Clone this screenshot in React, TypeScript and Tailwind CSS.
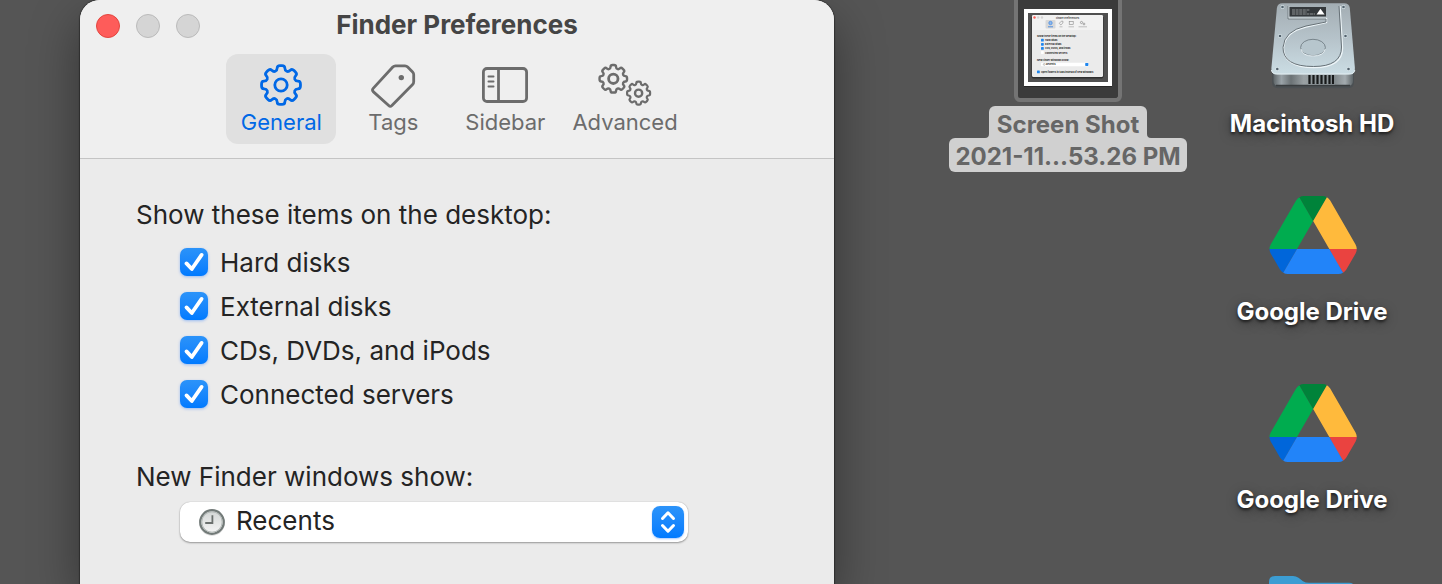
import { useState } from "react";
import type { ReactNode } from "react";
import clsx from "clsx";

// Closed path through the points with every corner rounded off
function roundedPath(points: number[][], cut: number) {
  return points
    .map((p, i) => {
      const prev = points[(i + points.length - 1) % points.length];
      const next = points[(i + 1) % points.length];
      const towards = (q: number[]) => {
        const len = Math.hypot(q[0] - p[0], q[1] - p[1]);
        const t = Math.min(cut / len, 0.5);
        return `${(p[0] + (q[0] - p[0]) * t).toFixed(2)} ${(p[1] + (q[1] - p[1]) * t).toFixed(2)}`;
      };
      return `${i === 0 ? "M" : "L"}${towards(prev)}Q${p[0].toFixed(2)} ${p[1].toFixed(2)} ${towards(next)}`;
    })
    .join("") + "Z";
}

function gearPath(cx: number, cy: number, outer: number, inner: number) {
  const points: number[][] = [];
  for (let tooth = 0; tooth < 8; tooth++) {
    const corners = [
      [inner, -15],
      [outer, -11],
      [outer, 11],
      [inner, 15],
    ];
    corners.forEach(([r, deg]) => {
      const a = ((tooth * 45 + deg - 90) * Math.PI) / 180;
      points.push([cx + r * Math.cos(a), cy + r * Math.sin(a)]);
    });
  }
  return roundedPath(points, outer * 0.14);
}

function GeneralIcon() {
  return (
    <svg width="46" height="46" viewBox="0 0 46 46" fill="none" stroke="currentColor" strokeWidth="2.8" strokeLinejoin="round">
      <path d={gearPath(23, 23, 19.8, 15)} />
      <circle cx="23" cy="23" r="6.2" />
    </svg>
  );
}

function TagsIcon() {
  return (
    <svg width="46" height="46" viewBox="0 0 46 46" fill="none" stroke="currentColor" strokeWidth="2.8" strokeLinejoin="round">
      <path d="M25.5 3.9H35Q36.6 3.9 37.7 5L42.6 9.9Q43.7 11 43.7 12.6V19.8Q43.7 21.4 42.6 22.5L21.9 43.6Q20.3 45.1 18.7 43.6L3.2 29.6Q1.8 28 3.2 26.4L22.8 5Q23.9 3.9 25.5 3.9Z" />
      <circle cx="31.3" cy="15.6" r="2.7" fill="currentColor" stroke="none" />
    </svg>
  );
}

function SidebarIcon() {
  return (
    <svg width="46" height="46" viewBox="0 0 46 46" fill="none" stroke="currentColor" strokeWidth="2.8">
      <rect x="1.4" y="6.5" width="43.2" height="33" rx="3.6" />
      <path d="M16.5 6.5V39.5" />
      <path d="M6.4 14.5H11.6M6.4 19.5H11.6M6.4 24.5H11.6" strokeWidth="1.8" strokeLinecap="round" />
    </svg>
  );
}

function AdvancedIcon() {
  return (
    <svg width="56" height="46" viewBox="0 0 56 46" fill="none" stroke="currentColor" strokeWidth="2.4" strokeLinejoin="round">
      <path d={gearPath(16.3, 16.8, 14, 10.7)} />
      <circle cx="16.3" cy="16.8" r="4.7" strokeWidth="2.8" />
      <path d={gearPath(41.6, 31.2, 11.7, 9)} strokeWidth="2.2" />
      <circle cx="41.6" cy="31.2" r="3.6" />
    </svg>
  );
}

function ClockIcon() {
  return (
    <svg width="28" height="28" viewBox="0 0 28 28" fill="none" className="pointer-events-none absolute top-[6px] left-[18px]">
      <defs>
        <linearGradient id="clock-face" x1="0" y1="0" x2="0" y2="1">
          <stop offset="0" stopColor="#d2d5d4" />
          <stop offset="1" stopColor="#f6f6f6" />
        </linearGradient>
      </defs>
      <circle cx="14" cy="15" r="12.8" fill="#000" fillOpacity=".15" />
      <circle cx="14" cy="14" r="11.8" fill="url(#clock-face)" stroke="#727a78" strokeWidth="2.2" />
      <circle cx="14" cy="14" r="10.2" stroke="#b3b9b7" strokeWidth="1" />
      <path d="M14.4 7.2V15H7.2" stroke="#6b706e" strokeWidth="1.8" />
    </svg>
  );
}

function HardDiskIcon() {
  return (
    <svg width="108" height="108" viewBox="0 0 108 108" fill="none">
      <defs>
        <linearGradient id="plate" x1="0" y1="0" x2="0" y2="1">
          <stop offset="0" stopColor="#a3adb3" />
          <stop offset=".5" stopColor="#b6c3ca" />
          <stop offset="1" stopColor="#cbdde4" />
        </linearGradient>
        <linearGradient id="base" x1="0" y1="0" x2="1" y2="0">
          <stop offset="0" stopColor="#5f6669" />
          <stop offset=".1" stopColor="#9aa3a8" />
          <stop offset=".22" stopColor="#6b7275" />
          <stop offset=".38" stopColor="#9aa1a4" />
          <stop offset=".75" stopColor="#7d8487" />
          <stop offset=".9" stopColor="#a3abaf" />
          <stop offset="1" stopColor="#5f6669" />
        </linearGradient>
      </defs>
      <path d="M14 70H96V82Q96 88.2 90 88.2H20Q14 88.2 14 82Z" fill="#4b5053" />
      <path d="M15.5 70H95V81Q95 86 89 86H21Q15.5 86 15.5 81Z" fill="url(#base)" />
      <path d="M18 85.5H92" stroke="#3a3e40" strokeWidth="1.4" />
      <path d="M50 73.5H77V84.5H50Z" fill="#8d9599" />
      <path d="M51.5 75V84M55.5 75V84M59.5 75V84M63.5 75V84M67.5 75V84M71.5 75V84M75 75V84" stroke="#17191a" strokeWidth="2.2" />
      <path d="M24.5 3.3H86Q91.3 3.3 91.8 8L96.9 68Q97.3 74.3 91.5 74.3H18.7Q13 74.3 13.4 68L18.9 8Q19.4 3.3 24.5 3.3Z" fill="url(#plate)" />
      <path d="M13.5 70Q14 74 18.7 74H91.5Q96.3 74 96.8 70" stroke="#e4eff3" strokeWidth="1" />
      <path d="M82 6L84.5 48Q84.5 67.5 56 67.5Q25.5 67.5 25.5 48Q26.500 32 48 27L68.5 22.5V18.5H30.5V6" stroke="#edf5f8" strokeWidth="1.4" />
      <path d="M81 6L83.5 47Q83.5 66.5 55.5 66.5Q25 66.5 25 47.5Q26 31 48 26L68 22V19H30V6" stroke="#677177" strokeWidth="1" />
      <rect x="31.5" y="7" width="36.5" height="9.5" fill="#34383b" />
      <path d="M34 10H52M34 12H49M34 14H57" stroke="#a3a8aa" strokeWidth=".8" strokeDasharray="3 .6" />
      <path d="M62.5 8.8L66.6 14.6H58.5Z" fill="#fff" />
      <ellipse cx="55" cy="47.5" rx="12.4" ry="8.2" fill="#b7c6cd" stroke="#717d83" strokeWidth=".9" />
      <path d="M43 49Q44.5 56 55 56Q65.500 56 67.3 49" stroke="#edf5f8" strokeWidth=".9" />
      {[[24.5, 7], [85.5, 7], [22, 36], [87.5, 36], [19.3, 69], [90.5, 69]].map(([x, y]) => (
        <g key={`${x}-${y}`}>
          <circle cx={x} cy={y} r="1.9" fill="#dce8ec" />
          <circle cx={x} cy={y} r="1.3" fill="#52616c" />
        </g>
      ))}
    </svg>
  );
}

function DriveIcon() {
  return (
    <svg width="108" height="108" viewBox="0 0 108 108">
      <g transform="translate(11.5 8)">
        <path d="M6.6 66.85 10.45 73.5c.8 1.4 1.95 2.5 3.3 3.3L27.5 53H0c0 1.55.4 3.1 1.2 4.5z" fill="#0066da" />
        <path d="M43.65 25 29.9 1.2c-1.35.8-2.5 1.9-3.3 3.3l-25.4 44A9.06 9.06 0 0 0 0 53h27.5z" fill="#00ac4f" />
        <path d="M73.55 76.8c1.35-.8 2.5-1.9 3.3-3.3l1.6-2.75L86.1 57.5c.8-1.4 1.2-2.95 1.2-4.5H59.8l5.85 11.5z" fill="#ea4340" />
        <path d="M43.65 25 57.4 1.2C56.05.4 54.5 0 52.9 0H34.4c-1.6 0-3.15.45-4.5 1.2z" fill="#00833a" />
        <path d="M59.8 53H27.5L13.75 76.8c1.35.8 2.9 1.2 4.5 1.2h50.8c1.6 0 3.15-.45 4.5-1.2z" fill="#2284f9" />
        <path d="M73.4 26.5 60.7 4.5c-.8-1.4-1.95-2.5-3.3-3.3L43.65 25l16.15 28h27.45c0-1.55-.4-3.1-1.2-4.5z" fill="#ffba3c" />
      </g>
    </svg>
  );
}

function FolderIcon() {
  return (
    <svg width="108" height="108" viewBox="0 0 108 108">
      <path d="M11 18Q11 12 17 12H35Q38 12 40.5 13.8L45 17.2Q47.5 18.8 51 18.8H91Q97 18.8 97 25V84Q97 90 91 90H17Q11 90 11 84Z" fill="#3c9dd3" />
    </svg>
  );
}

const thumbItems = ["Hard disks", "External disks", "CDs, DVDs, and iPods", "Connected servers"];

function ScreenShotIcon() {
  return (
    <div className="h-[102px] w-[108px] rounded-b-md border-x-4 border-b-4 border-[#747474] bg-[#3b3b3b]">
      <svg width="100" height="98" viewBox="0 0 100 98" className="font-['Inter',sans-serif]">
        <rect x="6" y="10" width="88" height="77" fill="#000" fillOpacity=".35" />
        <rect x="6" y="9" width="88" height="77" fill="#fff" />
        <rect x="10" y="13" width="80" height="69" fill="#505050" />
        <rect x="13.5" y="15.5" width="72" height="63" rx="2" fill="#2f2f2f" />
        <rect x="14" y="15" width="71" height="62" rx="1.5" fill="#ebebeb" />
        <path d="M14 30V16.5Q14 15 15.5 15H83.5Q85 15 85 16.5V30Z" fill="#f2f2f2" />
        <circle cx="16.5" cy="17.5" r="1.2" fill="#fe5f57" />
        <circle cx="20.2" cy="17.5" r="1.2" fill="#d5d5d5" />
        <circle cx="24" cy="17.5" r="1.2" fill="#d5d5d5" />
        <text x="49.5" y="18.600" fontSize="2.5" fontWeight="700" textAnchor="middle" fill="#444">Finder Preferences</text>
        <rect x="27.5" y="20" width="10" height="8.5" rx="1" fill="#d8d8d8" />
        <circle cx="32.5" cy="23" r="1.7" fill="#8db8ee" stroke="#3f86e0" strokeWidth=".7" />
        <path d="M30 26.8H35" stroke="#3f86e0" strokeWidth=".9" />
        <path d="M41.3 23.3L43.3 21.2H44.9V23L42.8 25Z" stroke="#888" strokeWidth=".6" fill="none" />
        <rect x="51.2" y="21.4" width="4" height="3" stroke="#888" strokeWidth=".6" fill="none" />
        <circle cx="63.5" cy="22.5" r="1.1" stroke="#888" strokeWidth=".7" fill="none" />
        <circle cx="66" cy="24" r=".9" stroke="#888" strokeWidth=".7" fill="none" />
        <path d="M41.5 26.8H44.5M50.5 26.8H56M60.5 26.8H69" stroke="#aaa" strokeWidth=".7" />
        <text x="19" y="36.6" fontSize="2.4" fill="#222">Show these items on the desktop:</text>
        {thumbItems.map((item, i) => (
          <g key={item}>
            <rect x="23" y={38.8 + i * 4.1} width="2.8" height="2.8" rx=".6" fill={i < 3 ? "#1f86ee" : "#fff"} />
            <text x="27" y={41.2 + i * 4.1} fontSize="2.4" fill="#222">{item}</text>
          </g>
        ))}
        <text x="19" y="61.3" fontSize="2.4" fill="#222">New Finder windows show:</text>
        <rect x="23" y="62.7" width="48" height="3.5" rx=".8" fill="#fff" />
        <circle cx="26.2" cy="64.4" r=".9" stroke="#888" strokeWidth=".5" fill="none" />
        <text x="28" y="65.4" fontSize="2.4" fill="#222">Recents</text>
        <rect x="67.2" y="63" width="3.2" height="2.9" rx=".6" fill="#1f86ee" />
        <rect x="19" y="70.5" width="2.8" height="2.8" rx=".6" fill="#1f86ee" />
        <text x="23" y="73" fontSize="2.4" fill="#222">Open folders in tabs instead of new windows</text>
      </svg>
    </div>
  );
}

function DesktopItem({ icon, label }: { icon: ReactNode; label?: string }) {
  return (
    <div className="flex h-47 w-61 flex-col items-center">
      <div className="h-[108px]">{icon}</div>
      {label && (
        <span className="text-2xl leading-8 font-bold text-white [text-shadow:0_2px_3px_rgba(0,0,0,0.6),0_3px_12px_rgba(0,0,0,0.4)]">
          {label}
        </span>
      )}
    </div>
  );
}

function SelectedItem() {
  return (
    <div className="flex h-47 w-61 flex-col items-center text-2xl leading-[30px] font-bold whitespace-nowrap text-[#666666]">
      <div className="h-[106px]">
        <ScreenShotIcon />
      </div>
      <span className="relative -mb-0.5 rounded-t-md bg-[#d0d0d0] px-2 pt-1">
        Screen Shot
        <svg width="4" height="4" viewBox="0 0 4 4" className="absolute bottom-0.5 -left-1">
          <path d="M4 0V4H0Q4 4 4 0Z" fill="#d0d0d0" />
        </svg>
        <svg width="4" height="4" viewBox="0 0 4 4" className="absolute -right-1 bottom-0.5">
          <path d="M0 0V4H4Q0 4 0 0Z" fill="#d0d0d0" />
        </svg>
      </span>
      <span className="rounded-md bg-[#d0d0d0] px-1.5 pt-1">2021-11...53.26 PM</span>
    </div>
  );
}

const tabs = [
  { name: "General", icon: <GeneralIcon /> },
  { name: "Tags", icon: <TagsIcon /> },
  { name: "Sidebar", icon: <SidebarIcon /> },
  { name: "Advanced", icon: <AdvancedIcon /> },
];

function Toolbar() {
  const [active, setActive] = useState("General");

  return (
    <header className="border-b border-[#c4c4c4] bg-[#efefef] pb-3.5">
      <div className="grid h-[54px] grid-cols-[1fr_auto_1fr] items-start px-4 pt-2.5">
        <div className="flex h-8 items-center gap-4">
          <button aria-label="Close" className="size-6 rounded-full border border-[#e2463f] bg-[#fe5c5a]" />
          <button aria-label="Minimize" className="size-6 rounded-full border border-[#bababa] bg-[#d5d5d5]" />
          <button aria-label="Zoom" className="size-6 rounded-full border border-[#bababa] bg-[#d5d5d5]" />
        </div>
        <h1 className="text-[26px] leading-[30px] font-bold text-[#454545]">Finder Preferences</h1>
      </div>
      <nav className="flex justify-center gap-0.5">
        {tabs.map((tab) => (
          <button
            key={tab.name}
            onClick={() => setActive(tab.name)}
            className={clsx(
              "flex min-w-[110px] flex-col items-center rounded-xl px-2.5 py-2 text-[22px] leading-7",
              active === tab.name ? "bg-[#e0e0e0] text-[#0068e6]" : "text-[#6c6c6c]"
            )}
          >
            {tab.icon}
            {tab.name}
          </button>
        ))}
      </nav>
    </header>
  );
}

function CheckRow({ label }: { label: string }) {
  return (
    <label className="flex h-11 items-start gap-3 pt-2 leading-[30px]">
      <span className="relative size-7">
        <input
          type="checkbox"
          defaultChecked
          className="peer block size-7 appearance-none rounded-[7px] bg-white shadow-[0_1px_3px_rgba(0,100,255,0.35)] checked:bg-linear-to-b checked:from-[#2b93f9] checked:to-[#007aff]"
        />
        <svg
          viewBox="0 0 28 28"
          fill="none"
          stroke="#fff"
          strokeWidth="3.8"
          strokeLinecap="round"
          strokeLinejoin="round"
          className="pointer-events-none absolute inset-0 hidden size-7 peer-checked:block"
        >
          <path d="M6.5 15.4L11.8 21L21.6 6.9" />
        </svg>
      </span>
      {label}
    </label>
  );
}

function PreferencesWindow() {
  return (
    <section className="flex w-full max-w-[754px] flex-col overflow-hidden rounded-t-[20px] bg-[#ebebeb] shadow-[0_0_1px_1px_rgba(0,0,0,0.35),0_20px_50px_rgba(0,0,0,0.4)]">
      <Toolbar />
      <div className="px-14 pt-10 text-[26px] leading-8 text-[#242424]">
        <fieldset>
          <legend>Show these items on the desktop:</legend>
          <div className="pt-[9px] pl-11">
            <CheckRow label="Hard disks" />
            <CheckRow label="External disks" />
            <CheckRow label="CDs, DVDs, and iPods" />
            <CheckRow label="Connected servers" />
          </div>
        </fieldset>
        <label htmlFor="new-window" className="mt-[45px] block">
          New Finder windows show:
        </label>
        <div className="relative mt-[9px] ml-11 max-w-[508px]">
          <select
            id="new-window"
            className="block h-10 w-full appearance-none rounded-[10px] bg-white pr-12 pb-0.5 pl-14 leading-8 shadow-[0_1px_2px_rgba(0,0,0,0.35),0_0_1px_rgba(0,0,0,0.3)]"
          >
            <option>Recents</option>
          </select>
          <ClockIcon />
          <svg
            viewBox="0 0 32 32"
            fill="none"
            stroke="#fff"
            strokeWidth="3"
            strokeLinecap="round"
            strokeLinejoin="round"
            className="pointer-events-none absolute top-1 right-1 size-8 rounded-lg bg-linear-to-b from-[#2b93f9] to-[#007aff] shadow-[0_1px_2px_rgba(0,100,255,0.35)]"
          >
            <path d="M10.5 12.5L16 6.8L21.5 12.5M10.5 19.5L16 25.2L21.5 19.5" />
          </svg>
        </div>
      </div>
    </section>
  );
}

export default function App() {
  return (
    <main className="flex h-screen justify-between overflow-hidden bg-[#555555] pr-2 pl-20 font-['Inter',sans-serif]">
      <PreferencesWindow />
      <div className="flex shrink-0">
        <SelectedItem />
        <div>
          <DesktopItem icon={<HardDiskIcon />} label="Macintosh HD" />
          <DesktopItem icon={<DriveIcon />} label="Google Drive" />
          <DesktopItem icon={<DriveIcon />} label="Google Drive" />
          <DesktopItem icon={<FolderIcon />} />
        </div>
      </div>
    </main>
  );
}
